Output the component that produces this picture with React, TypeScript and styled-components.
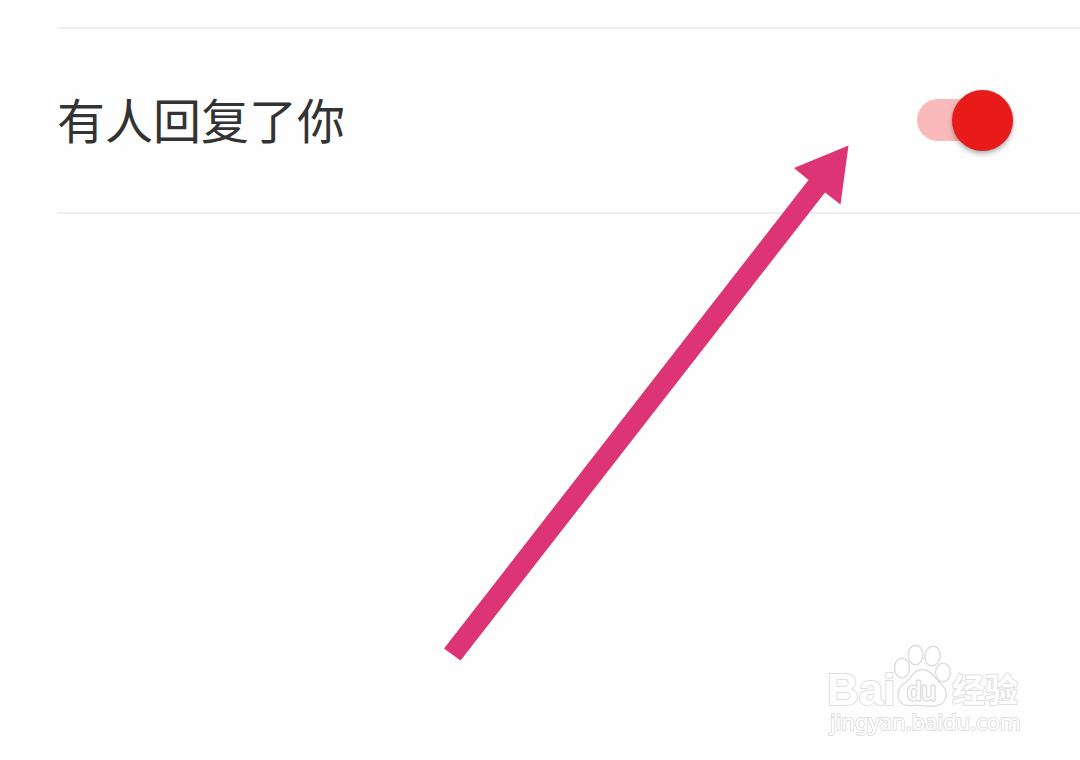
import React, { useState } from 'react';
import styled, { createGlobalStyle } from 'styled-components';

const GlobalStyle = createGlobalStyle`
  * { box-sizing: border-box; }
  body {
    margin: 0;
    background: #fefefe;
    font-family: "Noto Sans CJK SC", "Noto Sans", sans-serif;
  }
`;

const Page = styled.main`
  position: relative;
  min-height: 100vh;
  padding-top: 27px;
  overflow: hidden;
`;

const SettingsList = styled.section`
  margin-left: 57px;
  border-top: 2px solid #eee;
`;

const SettingRow = styled.label`
  display: flex;
  align-items: center;
  justify-content: space-between;
  padding: 54px 67px 55px 0;
  border-bottom: 2px solid #eee;
  cursor: pointer;
`;

const SettingName = styled.span`
  padding-bottom: 4px;
  font-size: 48px;
  line-height: 70px;
  color: #333;
`;

const Switch = styled.input.attrs({ type: 'checkbox', role: 'switch' })`
  appearance: none;
  display: flex;
  align-items: center;
  width: 96px;
  height: 42px;
  margin: 0;
  border-radius: 21px;
  background: #ddd;
  cursor: pointer;

  &::before {
    content: "";
    width: 61px;
    height: 61px;
    flex: none;
    border-radius: 50%;
    background: #f5f5f5;
    box-shadow: 0 3px 5px rgba(0, 0, 0, 0.28), 0 0 3px rgba(0, 0, 0, 0.1);
  }

  &:checked {
    justify-content: flex-end;
    background: #fababa;
  }

  &:checked::before {
    background: #e81a1a;
  }
`;

const PointerArrow = styled.svg`
  position: absolute;
  top: 145px;
  left: 444px;
  width: 405px;
  height: 516px;
  pointer-events: none;
`;

const Watermark = styled.svg`
  position: absolute;
  top: 640px;
  left: 824px;
  width: 204px;
  height: 102px;
  pointer-events: none;
  fill: #fff;
  stroke: #dedede;
  stroke-width: 1.5px;
  stroke-linejoin: round;
`;

const MarkText = styled.text<{ $size: number; $weight: number; $family: string; $outline: number }>`
  font-family: ${(p) => p.$family}, sans-serif;
  font-size: ${(p) => p.$size}px;
  font-weight: ${(p) => p.$weight};
  stroke-width: ${(p) => p.$outline}px;
  paint-order: stroke;
`;

export default function App() {
  const [replies, setReplies] = useState(true);
  return (
    <Page>
      <GlobalStyle />
      <SettingsList>
        <SettingRow>
          <SettingName>有人回复了你</SettingName>
          <Switch checked={replies} onChange={(e) => setReplies(e.target.checked)} />
        </SettingRow>
      </SettingsList>
      <PointerArrow viewBox="0 0 405 516" aria-hidden="true">
        <path d="M404.5 0.5 350 23 364.5 35 0 503.5 16.5 515.5 381 47.5 396.5 59.5Z" fill="#dc3474" />
      </PointerArrow>
      <Watermark viewBox="0 0 204 102" role="img" aria-label="Baidu 经验">
        <ellipse cx="78" cy="28" rx="7.500" ry="9.800" />
        <ellipse cx="91.500" cy="15" rx="7.300" ry="9.800" />
        <ellipse cx="108.500" cy="16" rx="7.700" ry="9.800" transform="rotate(10 108.5 16)" />
        <ellipse cx="119" cy="32.500" rx="7.500" ry="9.300" />
        <path d="M98 29.500C92 29.500 89 34 86 38C83 42 80 43 77 46.500C74.500 49.500 74 52 74 55C74.500 61 78 65.500 84 65.500C89 65.500 92 65 97 65.500C102 66 106 66.500 111 66C118 65.500 122 61 122.500 55C122.500 49 119 45.500 115 42C111 38.500 107 29.500 98 29.500Z" />
        <MarkText x="3" y="65" $size={44} $weight={700} $family='"Liberation Sans"' $outline={2}>Bai</MarkText>
        <MarkText x="83" y="60" $size={26} $weight={400} $family='"Liberation Sans"' $outline={3}>du</MarkText>
        <MarkText x="128" y="62" $size={33} $weight={700} $family='"Noto Sans CJK SC"' $outline={2}>经验</MarkText>
        <MarkText x="6" y="90" $size={22} $weight={400} $family='"Noto Sans"' $outline={2}>jingyan.baidu.com</MarkText>
      </Watermark>
    </Page>
  );
}
